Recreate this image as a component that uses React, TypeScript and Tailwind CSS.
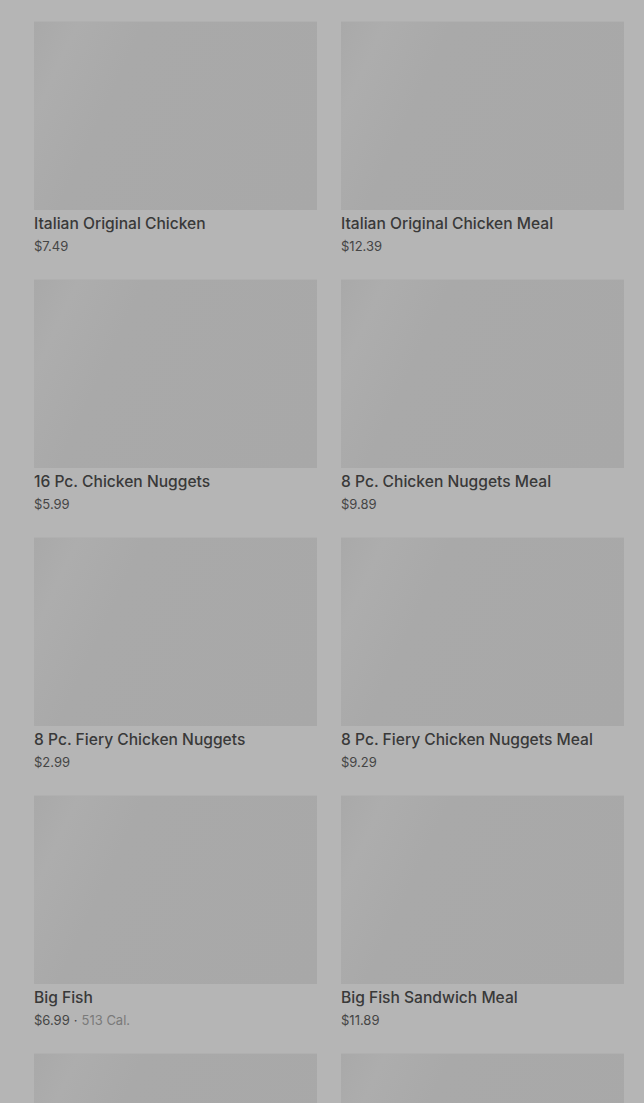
import React from 'react';

type Item = { name: string; price: string; cal?: string };

const items: Item[] = [
    { name: 'Italian Original Chicken', price: '$7.49' },
    { name: 'Italian Original Chicken Meal', price: '$12.39' },
    { name: '16 Pc. Chicken Nuggets', price: '$5.99' },
    { name: '8 Pc. Chicken Nuggets Meal', price: '$9.89' },
    { name: '8 Pc. Fiery Chicken Nuggets', price: '$2.99' },
    { name: '8 Pc. Fiery Chicken Nuggets Meal', price: '$9.29' },
    { name: 'Big Fish', price: '$6.99', cal: '513 Cal.' },
    { name: 'Big Fish Sandwich Meal', price: '$11.89' },
];

// imagen placeholder (cargando)
const ImagePlaceholder = () => (
    <div className="h-[188px] w-full bg-[linear-gradient(115deg,#a9a9a9_0%,#adadad_12%,#a9a9a9_30%,#a8a8a8_100%)] shadow-[0_-1px_0_#b0b0b0]" />
);

const MenuCard = ({ item }: { item: Item }) => (
    <div className="flex flex-col">
        <ImagePlaceholder />
        <p className="mt-[2px] text-[15.6px] leading-6 font-medium text-[#393939]">{item.name}</p>
        <p className="text-[13px] leading-5 text-[#454545]">
            {item.price}
            {item.cal && (
                <>
                    <span className="mx-[4px]">·</span>
                    <span className="text-[#7a7a7a]">{item.cal}</span>
                </>
            )}
        </p>
    </div>
);

export default function App() {
    return (
        <div
            className="h-[1103px] overflow-hidden bg-[#b5b5b5] pl-[34px] pr-[20px] pt-[22px]"
            style={{ fontFamily: 'Inter, "Noto Sans", sans-serif' }}
        >
            <div className="grid grid-cols-2 gap-x-[24px] gap-y-[24px]">
                {items.map((item) => (
                    <MenuCard key={item.name} item={item} />
                ))}
                {/* siguiente fila, cortada por el borde inferior */}
                <ImagePlaceholder />
                <ImagePlaceholder />
            </div>
        </div>
    );
}
